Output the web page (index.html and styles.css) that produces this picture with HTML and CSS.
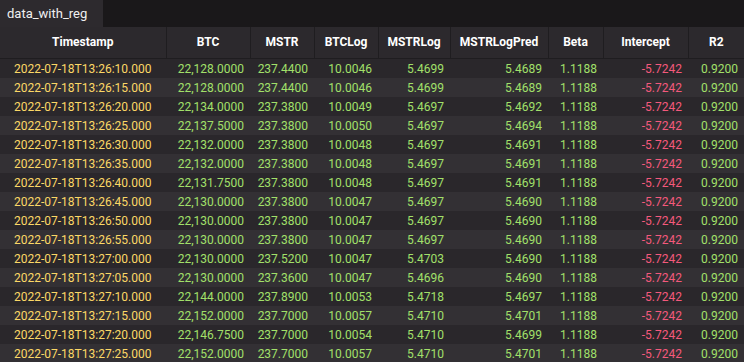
FILE: index.html
```html
<!DOCTYPE html>
<html lang="en">
<head>
  <meta charset="UTF-8">
  <title>data_with_reg</title>
  <link rel="stylesheet" href="styles.css">
</head>
<body>

  <div class="tab-bar">
    <div class="tab">data_with_reg</div>
  </div>

  <table class="grid">
    <colgroup>
      <col style="width:166px"><col style="width:84px"><col style="width:64px">
      <col style="width:64px"><col style="width:72px"><col style="width:98px">
      <col style="width:55px"><col style="width:85px"><col style="width:56px">
    </colgroup>
    <thead>
      <tr>
        <th>Timestamp</th><th>BTC</th><th>MSTR</th><th>BTCLog</th><th>MSTRLog</th>
        <th>MSTRLogPred</th><th>Beta</th><th>Intercept</th><th>R2</th>
      </tr>
    </thead>
    <tbody id="rows"></tbody>
  </table>

  <script>
    const rows = [
      ["2022-07-18T13:26:10.000", "22,128.0000", "237.4400", "10.0046", "5.4699", "5.4689"],
      ["2022-07-18T13:26:15.000", "22,128.0000", "237.4400", "10.0046", "5.4699", "5.4689"],
      ["2022-07-18T13:26:20.000", "22,134.0000", "237.3800", "10.0049", "5.4697", "5.4692"],
      ["2022-07-18T13:26:25.000", "22,137.5000", "237.3800", "10.0050", "5.4697", "5.4694"],
      ["2022-07-18T13:26:30.000", "22,132.0000", "237.3800", "10.0048", "5.4697", "5.4691"],
      ["2022-07-18T13:26:35.000", "22,132.0000", "237.3800", "10.0048", "5.4697", "5.4691"],
      ["2022-07-18T13:26:40.000", "22,131.7500", "237.3800", "10.0048", "5.4697", "5.4691"],
      ["2022-07-18T13:26:45.000", "22,130.0000", "237.3800", "10.0047", "5.4697", "5.4690"],
      ["2022-07-18T13:26:50.000", "22,130.0000", "237.3800", "10.0047", "5.4697", "5.4690"],
      ["2022-07-18T13:26:55.000", "22,130.0000", "237.3800", "10.0047", "5.4697", "5.4690"],
      ["2022-07-18T13:27:00.000", "22,130.0000", "237.5200", "10.0047", "5.4703", "5.4690"],
      ["2022-07-18T13:27:05.000", "22,130.0000", "237.3600", "10.0047", "5.4696", "5.4690"],
      ["2022-07-18T13:27:10.000", "22,144.0000", "237.8900", "10.0053", "5.4718", "5.4697"],
      ["2022-07-18T13:27:15.000", "22,152.0000", "237.7000", "10.0057", "5.4710", "5.4701"],
      ["2022-07-18T13:27:20.000", "22,146.7500", "237.7000", "10.0054", "5.4710", "5.4699"],
      ["2022-07-18T13:27:25.000", "22,152.0000", "237.7000", "10.0057", "5.4710", "5.4701"]
    ];

    const body = document.getElementById("rows");
    rows.forEach(r => {
      let html = `<tr><td class="date">${r[0]}</td>`;
      for (let i = 1; i < r.length; i++) {
        html += `<td class="num">${r[i]}</td>`;
      }
      html += `<td class="num">1.1188</td><td class="num neg">-5.7242</td><td class="num">0.9200</td></tr>`;
      body.innerHTML += html;
    });
  </script>
</body>
</html>
```

FILE: styles.css
```css
:root {
  --bar-bg: #1a181a;
  --tab-bg: #2d2a2e;
  --header-bg: #2c292d;
  --row-odd: #2a272b;
  --row-even: #333034;
  --line: #1f1d20;
  --date: #fcd866;
  --number: #a2e06a;
  --negative: #f5597c;
}

body {
  margin: 0;
  background-color: var(--row-odd);
  font-family: Roboto, "Noto Sans", sans-serif;
  font-size: 12px;
  overflow: hidden;
}

.tab-bar {
  display: flex;
  height: 27px;
  background-color: var(--bar-bg);
}

.tab {
  width: 103px;
  padding: 0 7px;
  box-sizing: border-box;
  display: flex;
  align-items: center;
  background-color: var(--tab-bg);
  color: #f0f0f0;
  font-size: 13px;
}

.grid {
  border-collapse: collapse;
  table-layout: fixed;
  width: 744px;
}

.grid th {
  height: 29px;
  padding: 0 4px 2px;
  background-color: var(--header-bg);
  border-right: 1px solid var(--line);
  border-bottom: 1px solid var(--line);
  color: #ffffff;
  font-weight: 700;
  text-align: center;
  white-space: nowrap;
}

.grid th:last-child {
  border-right: none;
}

.grid td {
  height: 19px;
  padding: 1px 6px 0 0;
  box-sizing: border-box;
  white-space: nowrap;
  overflow: hidden;
}

.grid tbody tr:nth-child(odd) {
  background-color: var(--row-odd);
}

.grid tbody tr:nth-child(even) {
  background-color: var(--row-even);
}

.date {
  color: var(--date);
  text-align: left;
  padding-left: 14px !important;
}

.num {
  color: var(--number);
  text-align: right;
}

.neg {
  color: var(--negative);
}
```
